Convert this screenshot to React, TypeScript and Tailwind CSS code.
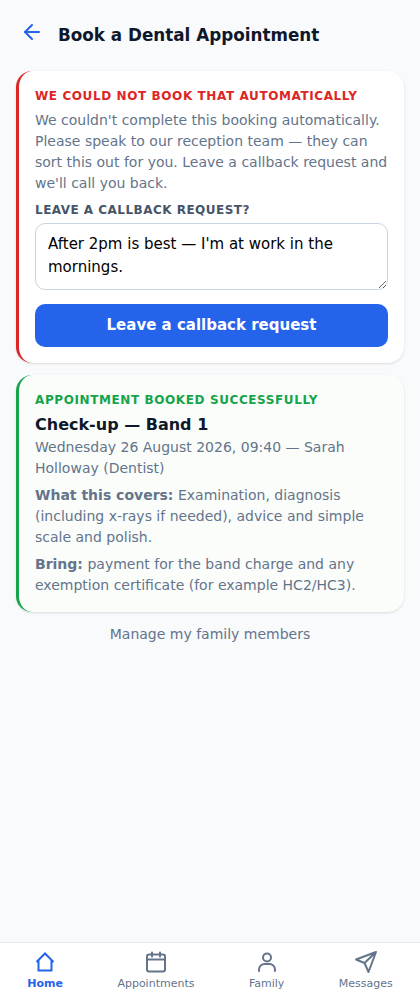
import { ArrowLeft } from 'lucide-react'

function HomeIcon() {
  return (
    <svg viewBox="0 0 24 24" className="size-6" fill="none" stroke="currentColor" strokeWidth="2" strokeLinejoin="miter">
      <path d="M3.5 12 12 3.5 20.5 12M5.5 10.5V20.5H18.5V10.5" />
    </svg>
  )
}

function CalendarIcon() {
  return (
    <svg viewBox="0 0 24 24" className="size-6" fill="none" stroke="currentColor" strokeWidth="2" strokeLinecap="round">
      <rect x="3" y="4.5" width="18" height="17" rx="2" />
      <path d="M8 2.5v4M16 2.5v4M3 9.5h18" />
    </svg>
  )
}

function UserIcon() {
  return (
    <svg viewBox="0 0 24 24" className="size-6" fill="none" stroke="currentColor" strokeWidth="2" strokeLinecap="round">
      <circle cx="12" cy="7.5" r="4" />
      <path d="M4 21v-1.5A5.5 5.5 0 0 1 9.500 14h5a5.500 5.500 0 0 1 5.500 5.500V21" />
    </svg>
  )
}

function SendIcon() {
  return (
    <svg viewBox="0 0 24 24" className="size-6" fill="none" stroke="currentColor" strokeWidth="2" strokeLinejoin="round">
      <path d="M22 2 2 9.500l8.500 3.500L14.500 22 22 2ZM10.500 13 22 2" />
    </svg>
  )
}

const navItems = [
  { label: 'Home', icon: HomeIcon, active: true },
  { label: 'Appointments', icon: CalendarIcon },
  { label: 'Family', icon: UserIcon },
  { label: 'Messages', icon: SendIcon },
]

export default function App() {
  return (
    <div className="flex min-h-[1000px] flex-col bg-[#f8fafc] font-['DejaVu_Sans',sans-serif] text-[#0f172a]">
      <header className="flex h-[68px] items-center gap-[14px] px-5">
        <button className="-mt-1 text-[#2563eb]">
          <ArrowLeft className="size-6" strokeWidth={2} />
        </button>
        <h1 className="mt-[3px] text-[16.8px] font-bold">Book a Dental Appointment</h1>
      </header>

      <main className="flex flex-1 flex-col gap-3 px-4 pt-[3px]">
        <section className="rounded-2xl border-l-[3px] border-[#dc2626] bg-white pt-[17px] pr-4 pb-4 pl-4 shadow-sm">
          <p className="text-xs font-bold tracking-[0.05em] text-[#dc2626]">WE COULD NOT BOOK THAT AUTOMATICALLY</p>
          <p className="mt-1.5 text-sm leading-[21px] text-[#64748b]">
            We couldn't complete this booking automatically. Please speak to our reception team — they can sort this out for you. Leave a callback request and we'll call you back.
          </p>
          <label className="mt-2 block text-xs font-bold tracking-[0.04em] text-[#475569]">LEAVE A CALLBACK REQUEST?</label>
          <textarea
            className="mt-[5px] block h-[67px] w-full rounded-[10px] border border-[#cbd5e1] bg-white px-3 pt-[9px] pb-2 text-[15px] leading-[22.5px] text-black"
            defaultValue="After 2pm is best — I'm at work in the mornings."
          />
          <button className="mt-3.5 h-[43px] w-full rounded-[10px] bg-[#2563eb] text-[15px] font-bold text-white">
            Leave a callback request
          </button>
        </section>

        <section className="rounded-2xl border-l-[3px] border-[#16a34a] bg-[#fafdfa] pt-[17px] pr-4 pb-4 pl-4 shadow-sm">
          <p className="text-xs font-bold tracking-[0.05em] text-[#16a34a]">APPOINTMENT BOOKED SUCCESSFULLY</p>
          <h2 className="mt-[5px] text-base font-bold">Check-up — Band 1</h2>
          <p className="text-sm leading-[21px] text-[#64748b]">Wednesday 26 August 2026, 09:40 — Sarah Holloway (Dentist)</p>
          <p className="mt-1.5 text-sm leading-[21px] text-[#64748b]">
            <strong className="text-[#64748b]">What this covers:</strong> Examination, diagnosis (including x-rays if needed), advice and simple scale and polish.
          </p>
          <p className="mt-1.5 text-sm leading-[21px] text-[#64748b]">
            <strong className="text-[#64748b]">Bring:</strong> payment for the band charge and any exemption certificate (for example HC2/HC3).
          </p>
        </section>

        <a className="block text-center text-sm text-[#64748b]">Manage my family members</a>
      </main>

      <nav className="flex h-[58px] justify-around border-t border-[#e2e8f0] bg-white">
        {navItems.map(({ label, icon: Icon, active }) => (
          <div key={label} className={`flex flex-col items-center justify-center gap-0.5 ${active ? 'text-[#2563eb]' : 'text-[#64748b]'}`}>
            <Icon />
            <span className={`text-[11px] ${active ? 'font-bold' : ''}`}>{label}</span>
          </div>
        ))}
      </nav>
    </div>
  )
}
